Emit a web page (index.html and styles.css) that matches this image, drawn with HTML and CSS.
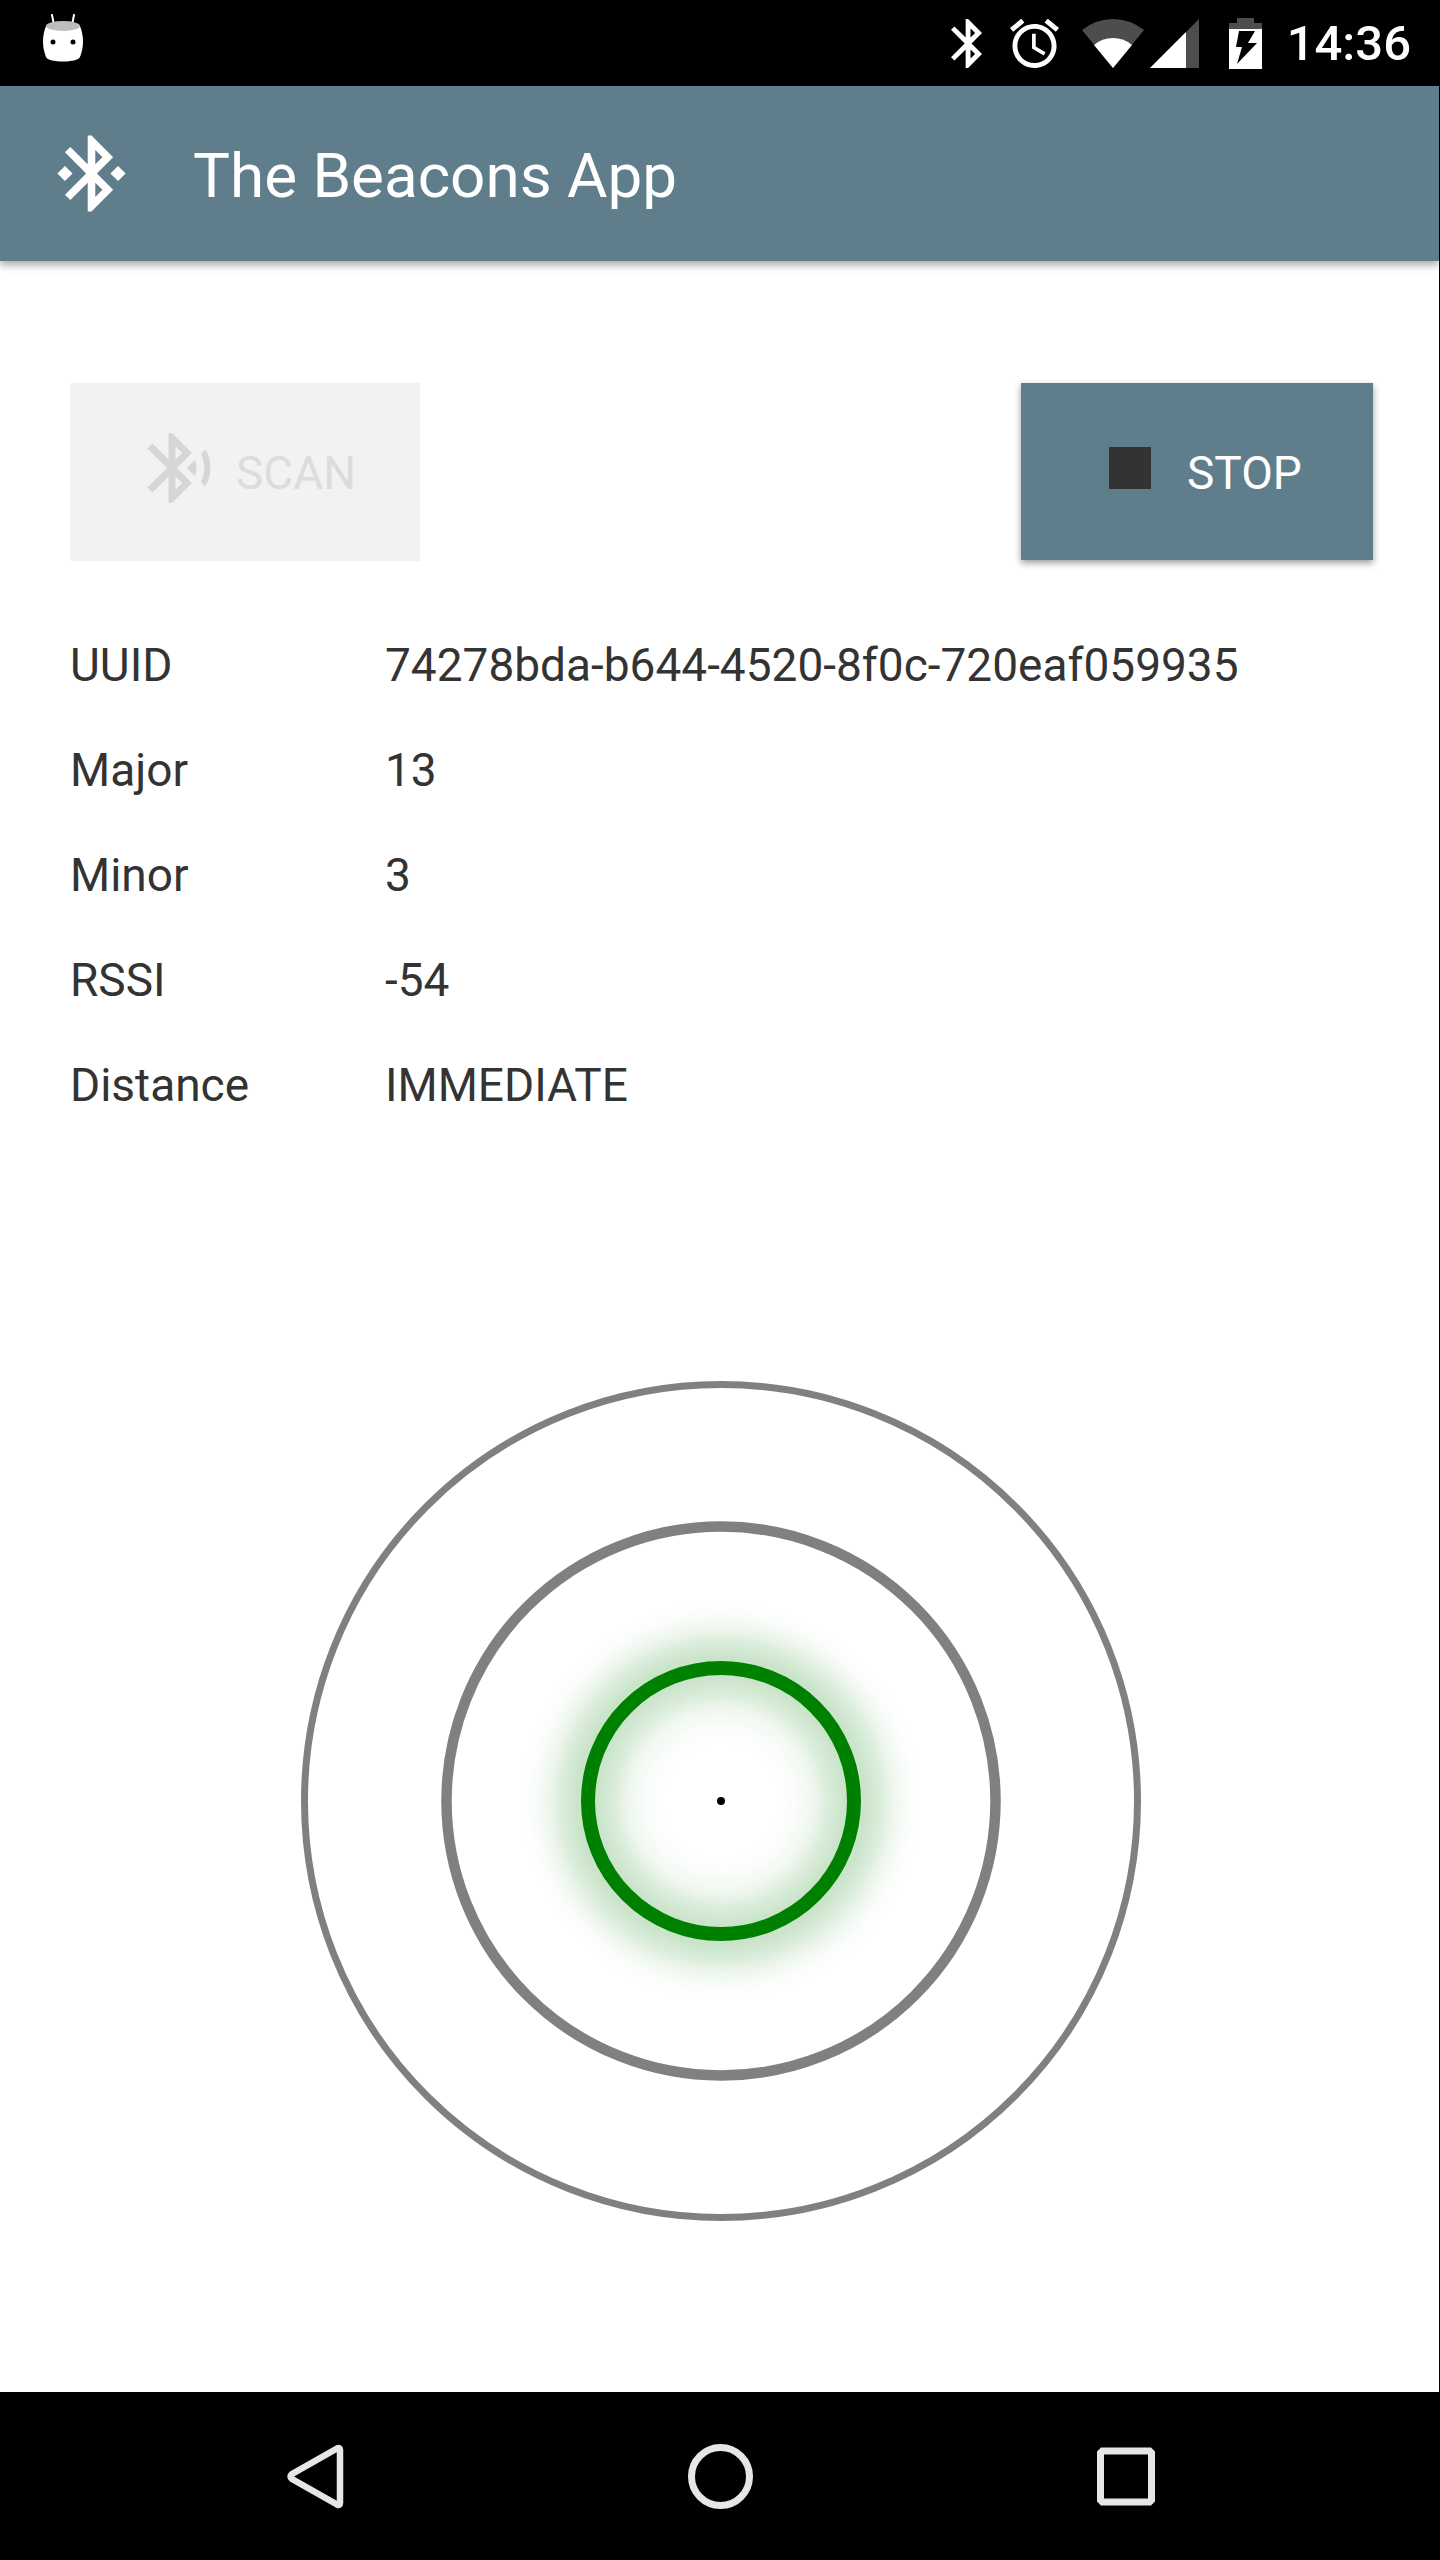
FILE: index.html
```html
<!DOCTYPE html>
<html lang="en">
<head>
<meta charset="utf-8">
<meta name="viewport" content="width=device-width, initial-scale=1">
<title>The Beacons App</title>
<link rel="stylesheet" href="styles.css">
</head>
<body>
<div class="status-bar">
  <svg class="notification" width="40" height="48" viewBox="0 0 40 48" aria-hidden="true">
    <path d="M9 1l2 10M31 1l-2 10" stroke="#fff" stroke-width="2" stroke-linecap="round"/>
    <path d="M3 12C-1 22-1 33 3 43c2 6 32 6 34 0 4-10 4-21 0-31z" fill="#fff"/>
    <ellipse cx="20" cy="12" rx="17" ry="5" fill="#bdbdbd"/>
    <circle cx="10" cy="28" r="2.500"/><circle cx="30" cy="28" r="2.500"/>
  </svg>
  <div class="indicators">
    <svg class="bluetooth" width="31" height="49" viewBox="5 2 12.7 20" aria-hidden="true"><path fill="#fff" d="M17.71 7.71L12 2h-1v7.59L6.41 5 5 6.41 10.59 12 5 17.59 6.41 19 11 14.41V22h1l5.71-5.71-4.3-4.29zM13 5.83l1.88 1.88L13 9.59zM14.88 16.29L13 18.17v-3.76z"/></svg>
    <svg class="alarm" width="49" height="49" viewBox="2 2 20 20" aria-hidden="true"><path fill="#fff" d="M22 5.72l-4.6-3.86-1.29 1.53 4.6 3.86zM7.88 3.39L6.6 1.86 2 5.71l1.29 1.53zM12.5 8H11v6l4.75 2.85.75-1.23-4-2.37zM12 4c-4.97 0-9 4.03-9 9s4.02 9 9 9c4.97 0 9-4.03 9-9s-4.03-9-9-9zm0 16c-3.87 0-7-3.13-7-7s3.13-7 7-7 7 3.13 7 7-3.13 7-7 7z"/></svg>
    <svg class="wifi" width="62" height="49" viewBox="0 0 62 49" aria-hidden="true"><path fill="#4d4d4d" d="M0 11Q14 0 31 0t31 11L31 49z"/><path fill="#fff" d="M12 26q8-7 19-7t19 7L31 49z"/></svg>
    <svg class="signal" width="49" height="49" viewBox="0 0 49 49" aria-hidden="true"><path fill="#4d4d4d" d="M49 0v49H0z"/><path fill="#fff" d="M36 13v36H0z"/></svg>
    <svg class="battery" width="33" height="51" viewBox="0 0 33 51" aria-hidden="true"><path fill="#4d4d4d" d="M8 0h17v5h8v6H0V5h8z"/><path fill="#fff" d="M0 11h33v40H0z"/><path d="M10 13h16l-7 12h9L8 46l5-17H7z"/></svg>
    <time class="clock">14:36</time>
  </div>
</div>

<div class="app">
  <header class="app-bar">
    <svg width="91" height="91" viewBox="0 0 24 24" aria-hidden="true"><path fill="#fff" d="M7 12l-2-2-2 2 2 2zM17.71 7.71L12 2h-1v7.59L6.41 5 5 6.41 10.59 12 5 17.59 6.41 19 11 14.41V22h1l5.71-5.71-4.3-4.29zM13 5.83l1.88 1.88L13 9.59zM14.88 16.29L13 18.17v-3.76zM19 10l-2 2 2 2 2-2z"/></svg>
    <h1 class="title">The Beacons App</h1>
  </header>

  <main class="content">
    <div class="actions">
      <button class="action scan" type="button" disabled>
        <svg width="84" height="84" viewBox="0 0 24 24" aria-hidden="true"><path fill="#d6d6d6" d="M14.24 12.01l2.32 2.32c.28-.72.44-1.51.44-2.33 0-.82-.16-1.59-.43-2.31zM19.53 6.71l-1.26 1.26c.63 1.21.98 2.57.98 4.02s-.36 2.82-.98 4.02l1.2 1.2c.97-1.54 1.54-3.36 1.54-5.31-.01-1.89-.55-3.67-1.48-5.19zM15.71 7.71L10 2H9v7.59L4.41 5 3 6.41 8.59 12 3 17.59 4.41 19 9 14.41V22h1l5.71-5.71-4.3-4.29zM11 5.83l1.88 1.88L11 9.59zM12.88 16.29L11 18.17v-3.76z"/></svg>
        <span class="action-label">SCAN</span>
      </button>
      <button class="action stop" type="button">
        <svg width="84" height="84" viewBox="0 0 24 24" aria-hidden="true"><path fill="#333" d="M6 6h12v12H6z"/></svg>
        <span class="action-label">STOP</span>
      </button>
    </div>

    <table class="details">
      <tr><th scope="row">UUID</th><td>74278bda-b644-4520-8f0c-720eaf059935</td></tr>
      <tr><th scope="row">Major</th><td>13</td></tr>
      <tr><th scope="row">Minor</th><td>3</td></tr>
      <tr><th scope="row">RSSI</th><td>-54</td></tr>
      <tr><th scope="row">Distance</th><td>IMMEDIATE</td></tr>
    </table>

    <svg class="radar" viewBox="0 0 842 842" role="img" aria-label="Beacon distance: immediate">
      <defs>
        <radialGradient id="glow" gradientUnits="userSpaceOnUse" cx="420" cy="421" r="200">
          <stop offset=".28" stop-color="#008000" stop-opacity="0"/>
          <stop offset=".37" stop-color="#008000" stop-opacity=".02"/>
          <stop offset=".46" stop-color="#008000" stop-opacity=".06"/>
          <stop offset=".54" stop-color="#008000" stop-opacity=".15"/>
          <stop offset=".62" stop-color="#008000" stop-opacity=".21"/>
          <stop offset=".72" stop-color="#008000" stop-opacity=".21"/>
          <stop offset=".8" stop-color="#008000" stop-opacity=".14"/>
          <stop offset=".86" stop-color="#008000" stop-opacity=".07"/>
          <stop offset=".93" stop-color="#008000" stop-opacity=".02"/>
          <stop offset="1" stop-color="#008000" stop-opacity="0"/>
        </radialGradient>
      </defs>
      <circle cx="420" cy="421" r="200" fill="url(#glow)"/>
      <circle cx="420" cy="421" r="416.5" fill="none" stroke="#808080" stroke-width="7"/>
      <circle cx="420" cy="421" r="274.5" fill="none" stroke="#808080" stroke-width="10.5"/>
      <circle cx="420" cy="421" r="133" fill="none" stroke="#008000" stroke-width="14"/>
      <circle cx="420" cy="421" r="4"/>
    </svg>
  </main>
</div>

<nav class="nav-bar">
  <button class="nav-key" type="button" aria-label="Back"><svg width="72" height="72" viewBox="0 0 72 72" aria-hidden="true"><path d="M58 8.500Q61 7 61 10v53q0 3-3 1.500L13 39q-3-2.500 0-5z" fill="none" stroke="#e6e6e6" stroke-width="6.500" stroke-linejoin="round"/></svg></button>
  <button class="nav-key" type="button" aria-label="Home"><svg width="72" height="72" viewBox="0 0 72 72" aria-hidden="true"><circle cx="36.500" cy="36.500" r="29" fill="none" stroke="#e6e6e6" stroke-width="7"/></svg></button>
  <button class="nav-key" type="button" aria-label="Recent apps"><svg width="72" height="72" viewBox="0 0 72 72" aria-hidden="true"><path fill="#e6e6e6" fill-rule="evenodd" d="M12 7.500h50l4 4v50l-4 4H12l-4-4v-50zM15 14.500v44h44v-44z"/></svg></button>
</nav>
</body>
</html>
```
FILE: styles.css
```css
* {
  box-sizing: border-box;
}

body {
  margin: 0;
  min-height: 100vh;
  display: flex;
  flex-direction: column;
  background: #000;
  color: #333;
  font: 46px/53px Roboto, sans-serif;
}

svg {
  display: block;
  flex: none;
}

button {
  margin: 0;
  border: 0;
  font: inherit;
}

.status-bar {
  display: flex;
  justify-content: space-between;
  height: 86px;
  padding: 0 29px 0 43px;
}

.notification {
  margin-top: 14px;
}

.indicators {
  display: flex;
  align-items: center;
}

.alarm {
  margin-left: 28px;
}

.wifi {
  margin-left: 23px;
}

.signal {
  margin-left: 6px;
}

.battery {
  margin-left: 30px;
}

.clock {
  margin-left: 25px;
  color: #fff;
  font-size: 49px;
  font-weight: 500;
}

.app {
  flex: 1;
  display: flex;
  flex-direction: column;
  margin-right: 1px;
  background: #fff;
}

.app-bar {
  display: flex;
  align-items: center;
  gap: 56px;
  height: 175px;
  padding: 0 46px;
  background: #607d8b;
  color: #fff;
  box-shadow: 0 4px 8px rgba(0, 0, 0, .35);
}

.title {
  margin: 0;
  padding-top: 5px;
  font-size: 62px;
  line-height: 74px;
  font-weight: 400;
}

.content {
  display: flex;
  flex-direction: column;
  padding: 122px 66px 0 70px;
}

.actions {
  display: flex;
  justify-content: space-between;
}

.action {
  display: flex;
  align-items: center;
  gap: 15px;
  width: 352px;
  height: 177px;
  padding: 0 0 8px 67px;
}

.action-label {
  padding-top: 11px;
}

.scan {
  width: 350px;
  height: 178px;
  background: #f2f2f2;
  color: #dcdcdc;
}

.stop {
  background: #607d8b;
  color: #fff;
  box-shadow: 0 3px 7px rgba(0, 0, 0, .4);
}

.details {
  margin-top: 52px;
  border-collapse: collapse;
}

.details th,
.details td {
  height: 105px;
  padding: 0;
  text-align: left;
  font-weight: 400;
}

.details th {
  width: 315px;
}

.radar {
  align-self: center;
  width: 842px;
  max-width: 100%;
  margin-top: 242px;
}

.nav-bar {
  display: flex;
  justify-content: center;
  gap: 333px;
  padding: 48px 0;
}

.nav-key {
  padding: 0;
  background: none;
}
```
